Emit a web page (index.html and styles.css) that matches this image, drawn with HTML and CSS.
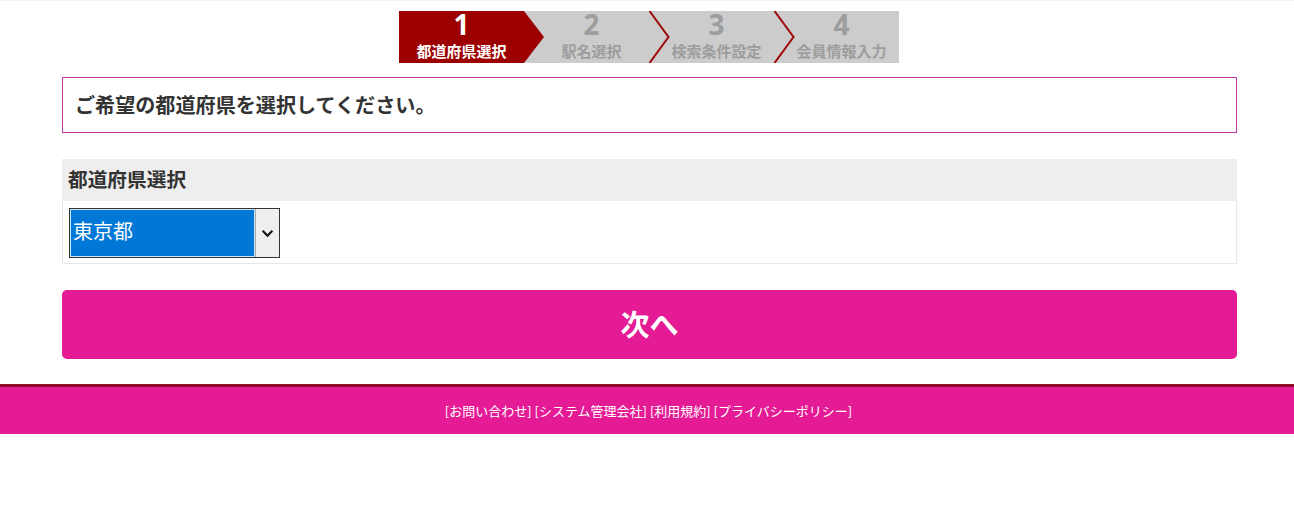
FILE: index.html
```html
<!DOCTYPE html>
<html lang="ja">
<head>
<meta charset="utf-8">
<title>都道府県選択</title>
<link rel="stylesheet" href="styles.css">
</head>
<body>
<div class="page">
  <main class="main">
    <ol class="steps">
      <li class="step step-active"><span class="step-num">1</span><span class="step-label">都道府県選択</span></li>
      <li class="step"><span class="step-num">2</span><span class="step-label">駅名選択</span></li>
      <li class="step step-chev">
        <svg class="chev" width="22" height="52" viewBox="0 0 22 52"><polyline points="0.5,0 19.5,26 0.5,52" fill="none" stroke="#9e0a0a" stroke-width="2"/></svg>
        <span class="step-num">3</span><span class="step-label">検索条件設定</span></li>
      <li class="step step-chev">
        <svg class="chev" width="22" height="52" viewBox="0 0 22 52"><polyline points="0.5,0 19.5,26 0.5,52" fill="none" stroke="#9e0a0a" stroke-width="2"/></svg>
        <span class="step-num">4</span><span class="step-label">会員情報入力</span></li>
    </ol>

    <div class="message">ご希望の都道府県を選択してください。</div>

    <section class="field">
      <h2 class="field-head">都道府県選択</h2>
      <div class="field-body">
        <div class="select-box">
          <select class="select">
            <option>東京都</option>
          </select>
          <span class="select-arrow">
            <svg width="12" height="8" viewBox="0 0 12 8"><polyline points="1.5,1.5 6,6 10.5,1.5" fill="none" stroke="#111" stroke-width="2"/></svg>
          </span>
        </div>
      </div>
    </section>

    <button class="next-btn" type="button">次へ</button>
  </main>

  <footer class="footer">
    <nav class="footer-links">
      <a href="#">[お問い合わせ]</a> <a href="#">[システム管理会社]</a> <a href="#">[利用規約]</a> <a href="#">[プライバシーポリシー]</a>
    </nav>
  </footer>
</div>
</body>
</html>
```
FILE: styles.css
```css
* { box-sizing: border-box; }
html, body { margin: 0; padding: 0; background: #fff; }
body {
  font-family: "Noto Sans CJK JP", "Noto Sans", sans-serif;
  color: #333;
  border-top: 1px solid #fbeef3;
}
.page { width: 1294px; }
.main {
  width: 1175px;
  margin-left: 62px;
  padding-top: 10px;
}

/* steps */
.steps {
  list-style: none;
  margin: 0 0 0 337px;
  padding: 0;
  width: 500px;
  height: 52px;
  display: flex;
}
.step {
  position: relative;
  width: 125px;
  height: 52px;
  background: #cccccc;
  color: #9d9d9d;
  display: flex;
  flex-direction: column;
  align-items: center;
  padding-left: 10px;
}
.step-active {
  background: #9c0000;
  color: #fff;
  padding-left: 0;
  z-index: 2;
}
.step-active::after {
  content: "";
  position: absolute;
  left: 125px;
  top: 0;
  border-top: 26px solid transparent;
  border-bottom: 26px solid transparent;
  border-left: 20px solid #9c0000;
}
.chev { position: absolute; left: 0; top: 0; }
.step-num {
  font-family: "Open Sans", "Liberation Sans", sans-serif;
  font-weight: 700;
  font-size: 28px;
  line-height: 30px;
  margin-top: -2px;
}
.step-label {
  font-size: 15px;
  font-weight: 700;
  line-height: 20px;
  margin-top: 2px;
}

/* message */
.message {
  margin-top: 14px;
  height: 56px;
  border: 1px solid #c03aa8;
  padding: 0 12px 2px;
  display: flex;
  align-items: center;
  font-size: 20.1px;
  font-weight: 700;
  color: #333;
}

/* field */
.field { margin-top: 26px; }
.field-head {
  margin: 0;
  height: 42px;
  background: #eeeeee;
  padding: 0 6px 3px;
  display: flex;
  align-items: center;
  font-size: 19.7px;
  font-weight: 700;
  color: #333;
}
.field-body {
  height: 63px;
  border: 1px solid #e8e8e8;
  border-top: none;
  padding: 7px 6px 0;
}
.select-box {
  display: flex;
  width: 211px;
  height: 50px;
  border: 1px solid #333;
}
.select {
  appearance: none;
  -webkit-appearance: none;
  width: 185px;
  height: 48px;
  margin: 0;
  border: 1px solid #cfe8f7;
  border-radius: 0;
  background: #0078d7;
  color: #fff;
  font-family: "Noto Sans CJK JP", sans-serif;
  font-size: 20px;
  padding: 0 2px 5px;
  outline: none;
}
.select-arrow {
  flex: 1;
  background: #efefef;
  border-left: 1px solid #aaa;
  display: flex;
  align-items: center;
  justify-content: center;
}
.select-arrow svg { width: 13px; height: 9px; }

/* button */
.next-btn {
  display: block;
  width: 100%;
  height: 69px;
  margin-top: 26px;
  border: none;
  border-radius: 5px;
  background: #e41b95;
  color: #fff;
  font-family: "Noto Sans CJK JP", sans-serif;
  font-size: 29px;
  font-weight: 700;
  padding-bottom: 4px;
  cursor: pointer;
}

/* footer */
.footer {
  margin-top: 25px;
  border-top: 3px solid #8e0a25;
  background: #e41b95;
  height: 50px;
  display: flex;
  align-items: center;
  justify-content: center;
}
.footer-links {
  font-size: 13px;
  color: #fff;
  padding-left: 3px;
}
.footer-links a { color: #fff; text-decoration: none; }
```
